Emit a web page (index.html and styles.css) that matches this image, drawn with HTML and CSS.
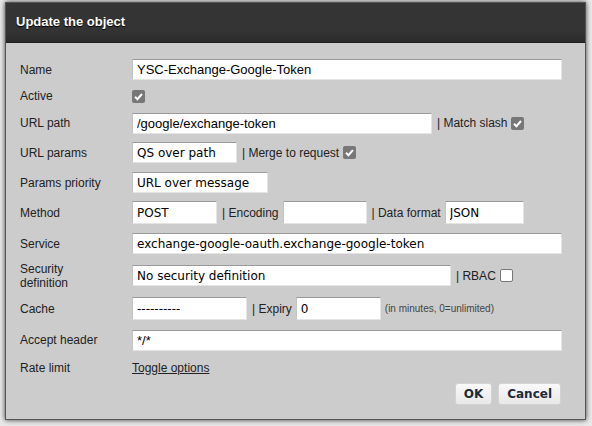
FILE: index.html
```html
<!DOCTYPE html>
<html>
<head>
<meta charset="utf-8">
<link rel="stylesheet" href="styles.css">
</head>
<body>
<div class="page">
  <div class="dialog">
    <div class="titlebar">Update the object</div>
    <div class="content">
      <div class="form">
        <div class="label">Name</div>
        <div class="field"><input class="inp arial w430" value="YSC-Exchange-Google-Token"></div>

        <div class="label">Active</div>
        <div class="field"><span class="cb checked"><svg viewBox="0 0 13 13" width="13" height="13"><path d="M3 6.8 L5.4 9.2 L10 4" fill="none" stroke="#fff" stroke-width="2"/></svg></span></div>

        <div class="label">URL path</div>
        <div class="field"><input class="inp arial w300" value="/google/exchange-token"><span class="sep">| Match slash</span><span class="cb checked"><svg viewBox="0 0 13 13" width="13" height="13"><path d="M3 6.8 L5.4 9.2 L10 4" fill="none" stroke="#fff" stroke-width="2"/></svg></span></div>

        <div class="label">URL params</div>
        <div class="field"><input class="inp w105" value="QS over path"><span class="sep">| Merge to request</span><span class="cb checked"><svg viewBox="0 0 13 13" width="13" height="13"><path d="M3 6.8 L5.4 9.2 L10 4" fill="none" stroke="#fff" stroke-width="2"/></svg></span></div>

        <div class="label">Params priority</div>
        <div class="field"><input class="inp w136" value="URL over message"></div>

        <div class="label">Method</div>
        <div class="field"><input class="inp w85 tall" value="POST"><span class="sep">| Encoding</span><input class="inp w84 tall" value=""><span class="sep">| Data format</span><input class="inp w79 tall" value="JSON"></div>

        <div class="label">Service</div>
        <div class="field"><input class="inp w430" value="exchange-google-oauth.exchange-google-token"></div>

        <div class="label two">Security<br>definition</div>
        <div class="field"><input class="inp w319" value="No security definition"><span class="sep">| RBAC</span><span class="cb"></span></div>

        <div class="label">Cache</div>
        <div class="field"><input class="inp w115 tall" value="----------"><span class="sep">| Expiry</span><input class="inp w85 tall" value="0"><span class="hint">(in minutes, 0=unlimited)</span></div>

        <div class="label">Accept header</div>
        <div class="field"><input class="inp arial w430" value="*/*"></div>

        <div class="label">Rate limit</div>
        <div class="field"><a class="toggle" href="#">Toggle options</a></div>
      </div>
      <div class="buttons">
        <button class="btn">OK</button>
        <button class="btn">Cancel</button>
      </div>
    </div>
  </div>
</div>
</body>
</html>
```

FILE: styles.css
```css
html, body {
  margin: 0;
  padding: 0;
}
body {
  width: 592px;
  height: 426px;
  overflow: hidden;
  background: #e9e9e9;
  font-family: "Liberation Sans", Arial, sans-serif;
}
.page {
  padding: 2px 0 0 5px;
}
.dialog {
  width: 579px;
  border: 1px solid #555;
  background: #cccccc;
  box-shadow: 0 0 5px rgba(0, 0, 0, 0.75);
}
.titlebar {
  height: 39px;
  line-height: 38px;
  background: linear-gradient(#353535 0%, #333333 75%, #2a2a2a 100%);
  border-bottom: 1px solid #1e1e1e;
  color: #fff;
  font-weight: bold;
  font-size: 13px;
  padding-left: 10px;
  text-shadow: 0 1px 1px #000;
}
.content {
  padding: 13px 24px 14px 14px;
}
.form {
  display: grid;
  grid-template-columns: 112px 1fr;
  grid-template-rows: 27px 26px 28px 31px 29px 31px 31px 33px 33px 30px 26px;
}
.label {
  font-size: 12px;
  color: #222;
  display: flex;
  align-items: center;
}
.label.two {
  line-height: 14px;
}
.field {
  display: flex;
  align-items: center;
  font-size: 12px;
  color: #222;
}
.inp {
  box-sizing: border-box;
  height: 21px;
  border: 1px solid #e4e4e4;
  border-top-color: #9a9a9a;
  border-left-color: #c4c4c4;
  background: #fff;
  padding: 0 4px;
  margin: 0;
  font-family: "DejaVu Sans", Verdana, sans-serif;
  font-size: 12px;
  color: #000;
  outline: none;
}
.inp.arial {
  font-family: "Liberation Sans", Arial, sans-serif;
  font-size: 13px;
}
.inp.tall {
  height: 23px;
}
.w430 { width: 430px; }
.w300 { width: 300px; }
.w105 { width: 105px; }
.w136 { width: 136px; }
.w85 { width: 85px; }
.w84 { width: 84px; }
.w79 { width: 79px; }
.w319 { width: 319px; }
.w115 { width: 115px; }
.sep {
  margin: 0 4px 0 5px;
  white-space: nowrap;
}
.cb {
  box-sizing: border-box;
  width: 13px;
  height: 13px;
  border-radius: 2px;
  background: #fff;
  border: 1px solid #777;
  display: inline-block;
}
.cb.checked {
  background: #777;
  border: none;
}
.cb svg {
  display: block;
}
.hint {
  font-size: 10px;
  color: #444;
  margin-left: 4px;
}
.toggle {
  color: #222;
  font-size: 12px;
  text-decoration: underline;
}
.buttons {
  display: flex;
  justify-content: flex-end;
  gap: 6px;
  margin-top: 2px;
}
.btn {
  height: 22px;
  padding: 0 8px;
  border: 1px solid #d3d3d3;
  border-radius: 3px;
  background: linear-gradient(#f9f9f9, #e8e8e8);
  color: #1c2a3a;
  font-family: "DejaVu Sans", Verdana, sans-serif;
  font-weight: bold;
  font-size: 12px;
}
```
